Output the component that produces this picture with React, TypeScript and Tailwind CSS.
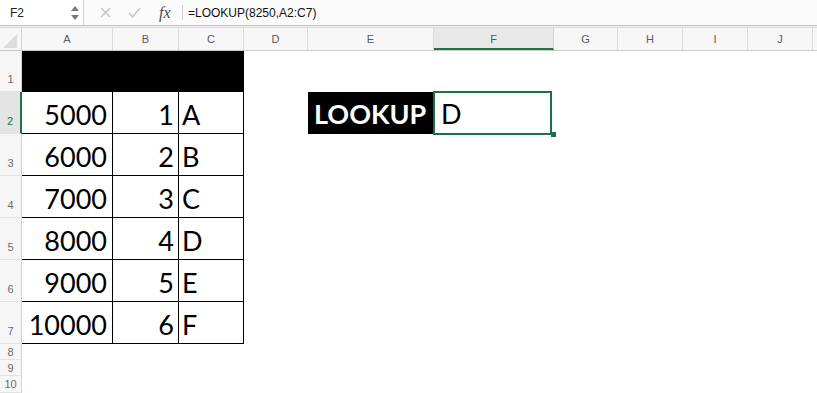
import React from "react";

const COLUMNS = [
  { name: "A", width: "w-[91px]" },
  { name: "B", width: "w-[66px]" },
  { name: "C", width: "w-[65px]" },
  { name: "D", width: "w-[64px]" },
  { name: "E", width: "w-[126px]" },
  { name: "F", width: "w-[120px]" },
  { name: "G", width: "w-[64px]" },
  { name: "H", width: "w-[65px]" },
  { name: "I", width: "w-[65px]" },
  { name: "J", width: "w-[65px]" },
  { name: "", width: "w-[65px]" },
];

const ROWS: [number, number, string][] = [
  [5000, 1, "A"],
  [6000, 2, "B"],
  [7000, 3, "C"],
  [8000, 4, "D"],
  [9000, 5, "E"],
  [10000, 6, "F"],
];

const cellFont = "font-['Lato',sans-serif] text-[27px] leading-[27px] text-black";

function RowHeader({ label, active = false, tall = true }: { label: string; active?: boolean; tall?: boolean }) {
  return (
    <div
      className={`w-[22px] shrink-0 flex justify-center border-b border-[#e2e2e2] font-['Liberation_Sans',sans-serif] text-[11px] leading-[12px] ${
        tall ? "items-end pb-[6px]" : "items-center"
      } ${
        active
          ? "bg-[#e4e4e4] text-[#217346] border-r-2 border-r-[#217346]"
          : "bg-[#f6f6f6] text-[#6b6b6b] border-r border-r-[#d4d4d4]"
      }`}
    >
      {label}
    </div>
  );
}

function FormulaBar() {
  return (
    <div className="flex h-[26px] bg-[#fbfbfb] border-b border-[#bfbfbf]">
      <div className="w-[84px] shrink-0 flex items-center bg-white border-r border-[#d0d0d0]">
        <span className="pl-[10px] flex-1 font-['Liberation_Sans',sans-serif] text-[12px] text-[#222]">F2</span>
        <div className="flex flex-col items-center gap-[4px] pr-[4px]">
          <svg width="8" height="5" viewBox="0 0 8 5">
            <path d="M4 0L8 5H0z" fill="#7a7a7a" />
          </svg>
          <svg width="8" height="5" viewBox="0 0 8 5">
            <path d="M0 0H8L4 5z" fill="#7a7a7a" />
          </svg>
        </div>
      </div>
      <div className="w-[98px] shrink-0 flex items-center">
        <svg className="ml-[16px]" width="11" height="11" viewBox="0 0 11 11">
          <path d="M1 1L10 10M10 1L1 10" stroke="#c4c4c4" strokeWidth="1.4" fill="none" />
        </svg>
        <svg className="ml-[17px]" width="13" height="11" viewBox="0 0 13 11">
          <path d="M1 6L4.5 10L12 1" stroke="#c4c4c4" strokeWidth="1.4" fill="none" />
        </svg>
        <span className="ml-[18px] font-['Liberation_Serif',serif] italic text-[16px] leading-none text-[#4a4a4a]">
          fx
        </span>
      </div>
      <div className="w-px h-[15px] self-center bg-[#cfcfcf]" />
      <div className="flex-1 flex items-center pl-[5px] font-['Liberation_Sans',sans-serif] text-[12px] text-[#111]">
        =LOOKUP(8250,A2:C7)
      </div>
    </div>
  );
}

function ColumnHeaders() {
  return (
    <div className="flex h-[23px] border-b border-[#c9c9c9] bg-[#f7f7f7]">
      <div className="w-[22px] shrink-0 flex items-end justify-end border-r border-[#d4d4d4] pr-[4px] pb-[2px]">
        <svg width="14" height="14" viewBox="0 0 14 14">
          <path d="M14 0V14H0z" fill="#dcdcdc" />
        </svg>
      </div>
      {COLUMNS.map((col, i) => (
        <div
          key={i}
          className={`${col.width} shrink-0 flex items-center justify-center font-['Liberation_Sans',sans-serif] text-[11px] ${
            col.name === "F"
              ? "bg-[#e8e8e8] text-[#217346] border-b-2 border-[#217346] pt-[2px] border-r border-r-[#d4d4d4]"
              : "text-[#5a5a5a] border-r border-[#dadada]"
          }`}
        >
          {col.name}
        </div>
      ))}
    </div>
  );
}

function DataRow({ row, index }: { row: [number, number, string]; index: number }) {
  const [amount, rank, letter] = row;
  const first = index === 0;
  return (
    <div className="flex h-[42px]">
      <RowHeader label={String(index + 2)} active={first} />
      <div className={`w-[91px] shrink-0 flex items-end justify-end pr-[5px] pb-[5px] border-b border-r border-black ${cellFont}`}>
        {amount}
      </div>
      <div className={`w-[66px] shrink-0 flex items-end justify-end pr-[4px] pb-[5px] border-b border-r border-black ${cellFont}`}>
        {rank}
      </div>
      <div className={`w-[65px] shrink-0 flex items-end pl-[3px] pb-[5px] border-b border-r border-black ${cellFont}`}>
        {letter}
      </div>
      <div className="w-[64px] shrink-0" />
      {first ? (
        <>
          <div className="w-[126px] shrink-0 flex items-end pl-[6px] pb-[7px] bg-black font-['Lato',sans-serif] font-bold text-[27px] leading-[27px] text-white">
            LOOKUP
          </div>
          <div className={`relative w-[120px] shrink-0 flex items-end pl-[7px] pb-[7px] ${cellFont}`}>
            D
            <div className="absolute -left-[1px] -top-[1px] right-[2px] -bottom-[1px] border-2 border-[#1e7145]" />
            <div className="absolute -right-[2px] -bottom-[3px] w-[5px] h-[5px] bg-[#1e7145]" />
          </div>
        </>
      ) : null}
    </div>
  );
}

export default function App() {
  return (
    <div className="w-[817px] h-[393px] overflow-hidden bg-white">
      <FormulaBar />
      <div className="h-[2px] bg-[#f3f3f3] border-b border-[#d8d8d8]" />
      <ColumnHeaders />
      <div className="flex h-[41px]">
        <RowHeader label="1" />
        <div className="w-[222px] shrink-0 bg-black" />
      </div>
      {ROWS.map((row, i) => (
        <DataRow key={i} row={row} index={i} />
      ))}
      {["8", "9", "10"].map((label) => (
        <div key={label} className={`flex ${label === "10" ? "h-[17px]" : "h-[16px]"}`}>
          <RowHeader label={label} tall={false} />
        </div>
      ))}
    </div>
  );
}
